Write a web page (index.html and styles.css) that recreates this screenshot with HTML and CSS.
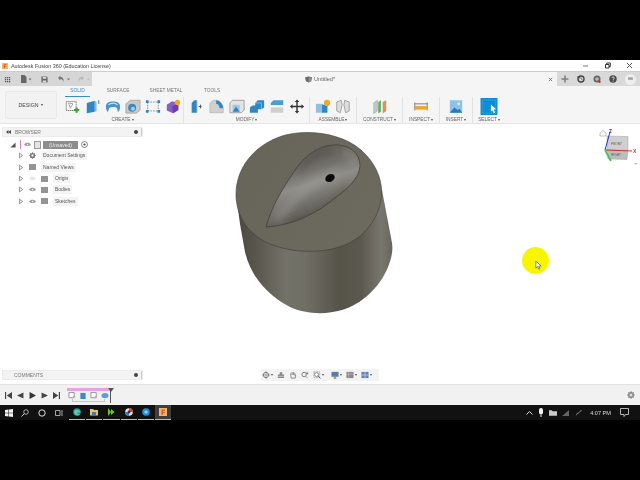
FILE: index.html
```html
<!DOCTYPE html>
<html lang="en">
<head>
<meta charset="utf-8">
<title>Autodesk Fusion 360</title>
<link rel="stylesheet" href="styles.css">
</head>
<body>
<div class="app">
  <header class="titlebar">
    <svg class="ti-logo" viewBox="0 0 8 8"><rect width="8" height="8" fill="#f2b56b"/><path d="M2.5 1.5h3.5v1.2H3.8v1.2h1.800V5H3.800v2H2.500z" fill="#d8541e"/></svg>
    <span class="ti-text">Autodesk Fusion 360 (Education License)</span>
    <div class="win">
      <svg viewBox="0 0 7 7"><path d="M1 4h5" stroke="#777" fill="none"/></svg>
      <svg viewBox="0 0 7 7"><path d="M1.500 2.500h3.500v3.500h-3.500zM2.800 2.500v-1.500h3.500v3.500h-1.300" stroke="#333" fill="none"/></svg>
      <svg viewBox="0 0 7 7"><path d="M1 1l5 5M6 1l-5 5" stroke="#555" fill="none"/></svg>
    </div>
  </header>

  <div class="qat">
    <div class="qat-left">
      <svg class="q-ic" viewBox="0 0 8 8"><path d="M1 1h1.500v1.500H1zM3.300 1h1.500v1.500H3.300zM5.600 1h1.500v1.500H5.600zM1 3.300h1.500v1.500H1zM3.300 3.300h1.500v1.500H3.300zM5.600 3.300h1.500v1.500H5.600zM1 5.600h1.500v1.500H1zM3.300 5.600h1.500v1.500H3.300zM5.600 5.600h1.500v1.500H5.600z" fill="#555"/></svg>
      <svg class="q-file" viewBox="0 0 12 8"><path d="M1 0h3.500L6.500 2v6H1z" fill="#666"/><path d="M8.500 3.500h3L10 5.500z" fill="#777"/></svg>
      <svg class="q-save" viewBox="0 0 8 8"><path d="M.5.500h6l1 1v6h-7z" fill="#666"/><path d="M2 1h4v2H2zM2 5h4v2.500H2z" fill="#ddd"/></svg>
      <svg class="q-undo" viewBox="0 0 14 8"><path d="M1 3l2.500-2.500V2C6 2 7 4 6.500 7 6 5 5 4 3.500 4v1.500z" fill="#777"/><path d="M10 3.500h3L11.500 5.500z" fill="#777"/></svg>
      <svg class="q-undo" viewBox="0 0 14 8"><path d="M7 3L4.500.500V2C2 2 1 4 1.500 7 2 5 3 4 4.500 4v1.500z" fill="#bbb"/><path d="M10 3.500h3L11.500 5.500z" fill="#bbb"/></svg>
    </div>
    <div class="doc">
      <svg class="doc-ic" viewBox="0 0 8 8"><path d="M0 1.500L4 .500l4 1L7 6 4 7.500 1 6z" fill="#6a6a6a"/><path d="M4 2L8 1.500 7 6 4 7.500z" fill="#8d8d8d"/></svg>
      <span>Untitled*</span>
    </div>
    <svg class="doc-x" viewBox="0 0 6 6"><path d="M1 1l4 4M5 1l-4 4" stroke="#666" fill="none"/></svg>
    <div class="qat-right">
      <svg class="plus" viewBox="0 0 8 8"><path d="M4 .500v7M.500 4h7" stroke="#7f7f7f" stroke-width="1.500" fill="none"/></svg>
      <svg viewBox="0 0 8 8"><circle cx="4" cy="4" r="3" stroke="#444" stroke-width="1.400" fill="none"/><path d="M0 1.500l3 .3-1 2.200z" fill="#444"/><path d="M4 2.500V4l1.200.6" stroke="#444" fill="none" stroke-width=".7"/></svg>
      <svg viewBox="0 0 8 8"><circle cx="4" cy="4" r="3.500" fill="#666"/><circle cx="4" cy="4" r="1.800" fill="#bbb"/><circle cx="6.500" cy="6.800" r="1.200" fill="#d22"/></svg>
      <svg viewBox="0 0 8 8"><circle cx="4" cy="4" r="3.700" fill="#4c4c4c"/><path d="M2.800 3c.2-1.400 2.500-1.400 2.500 0 0 1-1.200.9-1.200 1.900" stroke="#eee" stroke-width=".8" fill="none"/><circle cx="4.100" cy="6.100" r=".5" fill="#eee"/></svg>
      <span class="avatar">BB</span>
    </div>
  </div>

  <section class="ribbon">
    <div class="design"><span>DESIGN</span><i class="caret"></i></div>
    <div class="ribbon-main">
      <nav class="tabs">
        <span class="tab tab-solid">SOLID</span>
        <span class="tab tab-surface">SURFACE</span>
        <span class="tab tab-sheet">SHEET METAL</span>
        <span class="tab tab-tools">TOOLS</span>
      </nav>
      <div class="groups">
        <div class="group g-create">
          <div class="icons">
            <svg viewBox="0 0 18 16"><path d="M1.500 2.500h11v10h-11z" fill="#fff" stroke="#666" stroke-dasharray="1.500 .7"/><path d="M4 4l5 1-3 5z" fill="none" stroke="#999"/><path d="M13 9v6M10 12h6" stroke="#39a33a" stroke-width="2.400"/></svg>
            <svg viewBox="0 0 18 16"><path d="M2 4l9-2.500V14L2 15.500z" fill="#2f86c6"/><path d="M11 1.500l2 1.500v10l-2 1z" fill="#7bbbe5"/><path d="M15.500 1v4" stroke="#555"/></svg>
            <svg viewBox="0 0 18 16"><path d="M1 8c0-4 4-5.500 8-5.500S17 4 17 8c0 4-1.500 6-2.500 6l-1-4c-1-2-7-2-9 0l-1 4C2.500 14 1 12 1 8z" fill="#4a93cb"/><path d="M4 6c3-2 7-2 10 0" stroke="#cfe3f2" fill="none" stroke-width="1.400"/></svg>
            <svg viewBox="0 0 18 16"><path d="M1 5l5-4h11v11l-4 3.500H1z" fill="#c9c9c9" stroke="#888" stroke-width=".6"/><circle cx="8" cy="9.500" r="4.500" fill="#3f8ac4"/><circle cx="9" cy="10.500" r="2.200" fill="#a8cfe9"/></svg>
            <svg viewBox="0 0 18 16"><path d="M3 3h12M3 13h12M3 3v10M15 3v10" stroke="#8d8d8d" stroke-dasharray="2 1"/><path d="M1 1h3v3H1zM14 1h3v3h-3zM1 12h3v3H1zM14 12h3v3h-3z" fill="#2f86c6"/></svg>
            <svg viewBox="0 0 18 16"><path d="M2 6l6-4 7 2v8l-6 3.500-7-3z" fill="#8a5ec4"/><path d="M8 8l7-4v8l-6 3.500z" fill="#6b3fb0"/><circle cx="14" cy="3.500" r="3" fill="#f0a92c"/></svg>
          </div>
          <div class="glabel">CREATE<i class="caret"></i></div>
        </div>
        <div class="group g-modify">
          <div class="icons">
            <svg viewBox="0 0 18 16"><path d="M3 4l3-3h3v14H3z" fill="#2f86c6"/><path d="M9 1v14" stroke="#bbb"/><path d="M11 8h3M13 6v4" stroke="#555" stroke-width="1.300"/></svg>
            <svg viewBox="0 0 18 16"><path d="M1 15V6c0-3 3-5 7-5h1c4 1 7 5 7 9v5z" fill="#d0d0d0" stroke="#999" stroke-width=".5"/><path d="M8 1c4 0 8 5 8 9h-4C12 7 10 5 8 5z" fill="#2f86c6"/></svg>
            <svg viewBox="0 0 18 16"><path d="M1 4l3-3h13v11l-3 3H1z" fill="#e4e4e4" stroke="#777" stroke-width=".7"/><path d="M4 6h8v8H4z" fill="#a0c8e6"/><path d="M4 14l4-6 4 6z" fill="#2f86c6"/></svg>
            <svg viewBox="0 0 18 16"><path d="M1 9l3-2h6v8H1z" fill="#2f86c6"/><path d="M7 4l3-3h7v8l-3 2H7z" fill="#2f86c6"/><path d="M7 4h7v7" stroke="#9fcbea" fill="none" stroke-width=".8"/></svg>
            <svg viewBox="0 0 18 16"><path d="M2 4l3-3h11v6H2z" fill="#4a9bd6"/><path d="M2 7h14" stroke="#fff"/><path d="M2 9h14v6H2z" fill="#cfcfcf"/></svg>
            <svg viewBox="0 0 18 16"><path d="M9 0l2.500 3h-1.700v4.200H14V5.500L17 8l-3 2.500V8.800H9.800V13h1.700L9 16l-2.500-3h1.700V8.800H4v1.700L1 8l3-2.500v1.700h4.200V3H6.500z" fill="#333"/></svg>
          </div>
          <div class="glabel">MODIFY<i class="caret"></i></div>
        </div>
        <div class="group g-assemble">
          <div class="icons">
            <svg viewBox="0 0 18 16"><path d="M1 5h8v10H1z" fill="#8fbfe3"/><path d="M8 6h6v9H8z" fill="#2f86c6"/><circle cx="13.500" cy="4" r="3.500" fill="#f0a92c"/></svg>
            <svg viewBox="0 0 18 16"><path d="M2 3l5-2 1 5-2 9-4-2z" fill="#dedede" stroke="#8a8a8a" stroke-width=".8"/><path d="M16 3l-5-2-1 5 2 9 4-2z" fill="#dedede" stroke="#8a8a8a" stroke-width=".8"/></svg>
          </div>
          <div class="glabel">ASSEMBLE<i class="caret"></i></div>
        </div>
        <div class="group g-construct">
          <div class="icons">
            <svg viewBox="0 0 18 16"><path d="M2 4l4-3v12l-4 3z" fill="#c7c7c7" stroke="#888" stroke-width=".5"/><path d="M7 3l3-2v13l-3 2z" fill="#5eaf62"/><path d="M12 3l4-2v12l-4 3z" fill="#d79461"/></svg>
          </div>
          <div class="glabel">CONSTRUCT<i class="caret"></i></div>
        </div>
        <div class="group g-inspect">
          <div class="icons">
            <svg viewBox="0 0 18 16"><path d="M2 3.500v9M16 3.500v9M2 5h14" stroke="#555" fill="none" stroke-width=".8"/><path d="M2 7.500h14v4H2z" fill="#efa631"/></svg>
          </div>
          <div class="glabel">INSPECT<i class="caret"></i></div>
        </div>
        <div class="group g-insert">
          <div class="icons">
            <svg viewBox="0 0 18 16"><path d="M2 1h14v14H2z" fill="#8cc3ea"/><path d="M2 15l5-6 4 3 2-1.500 3 4.500z" fill="#2f79b8"/><circle cx="12" cy="5" r="1.500" fill="#e6f2fb"/></svg>
          </div>
          <div class="glabel">INSERT<i class="caret"></i></div>
        </div>
        <div class="group g-select">
          <div class="icons">
            <svg viewBox="0 0 18 18"><path d="M0 0h18v18H0z" fill="#0d8ed6"/><path d="M2 2h14v14H2z" fill="none" stroke="#6cc0ee" stroke-width=".6" stroke-dasharray="1 1"/><path d="M11 7l5.500 5-2.500.3 1.500 3.200-1.400.6-1.500-3.100-1.600 1.500z" fill="#fff"/></svg>
          </div>
          <div class="glabel">SELECT<i class="caret"></i></div>
        </div>
      </div>
    </div>
  </section>

  <main class="canvas">
    <svg class="model" viewBox="225 125 180 195">
      <defs>
        <linearGradient id="side" gradientUnits="userSpaceOnUse" x1="236" y1="250" x2="392" y2="250">
          <stop offset="0" stop-color="#4a483e"/>
          <stop offset=".12" stop-color="#58564c"/>
          <stop offset=".32" stop-color="#737269"/>
          <stop offset=".45" stop-color="#6f6e65"/>
          <stop offset=".66" stop-color="#565449"/>
          <stop offset=".8" stop-color="#5b594f"/>
          <stop offset=".93" stop-color="#78776e"/>
          <stop offset="1" stop-color="#68665c"/>
        </linearGradient>
        <linearGradient id="top" gradientUnits="userSpaceOnUse" x1="240" y1="150" x2="380" y2="240">
          <stop offset="0" stop-color="#67645a"/>
          <stop offset="1" stop-color="#6d6a60"/>
        </linearGradient>
        <linearGradient id="drop" gradientUnits="userSpaceOnUse" x1="305" y1="150" x2="325" y2="215">
          <stop offset="0" stop-color="#5d5b55"/>
          <stop offset=".3" stop-color="#73716b"/>
          <stop offset=".5" stop-color="#8f8e88"/>
          <stop offset=".75" stop-color="#72706a"/>
          <stop offset="1" stop-color="#5c5a54"/>
        </linearGradient>
        <filter id="soft" x="-30%" y="-30%" width="160%" height="160%"><feGaussianBlur stdDeviation="4"/></filter>
        <clipPath id="dropclip"><path d="M266 227C271 208 283 187 298 166 309 151 325 144 338 145 350 146 360 153 360 166 359 178 349 188 335 198 318 212 296 225 266 227z"/></clipPath>
      </defs>
      <path d="M236 194L240 224 245 252C250 274 266 295 290 307 305 314 325 315 342 310 362 304 380 287 388 267 392 257 393 250 392 243L382 190z" fill="url(#side)"/>
      <path d="M236 194C236 170 252 146 282 136 305 129 340 132 361 150 376 163 384 182 381 200 378 218 366 236 345 245 320 255 285 253 262 240 245 230 236 213 236 194z" fill="url(#top)" stroke="#3e3c34" stroke-width=".6"/>
      <path d="M266 227C271 208 283 187 298 166 309 151 325 144 338 145 350 146 360 153 360 166 359 178 349 188 335 198 318 212 296 225 266 227z" fill="url(#drop)" stroke="#3b3933" stroke-width=".7"/>
      <g clip-path="url(#dropclip)">
        <path d="M276 220C292 200 306 186 338 172" stroke="#a6a59f" stroke-width="3" fill="none" filter="url(#soft)"/>
        <path d="M345 150C352 155 356 162 352 172" stroke="#8b8a84" stroke-width="4" fill="none" filter="url(#soft)"/>
        <path d="M300 170C310 155 322 152 332 152" stroke="#4e4c47" stroke-width="4" fill="none" filter="url(#soft)"/>
        <path d="M290 224C308 220 330 208 350 188" stroke="#4a4843" stroke-width="3" fill="none" filter="url(#soft)"/>
      </g>
      <ellipse cx="330" cy="178" rx="5" ry="3.700" transform="rotate(-30 330 178)" fill="#0a0a0a"/>
    </svg>

    <svg class="cube" viewBox="0 0 41 38">
      <path d="M1 5l3-2.500 3 2.500v3H1z" fill="#fff" stroke="#999" stroke-width=".6"/>
      <path d="M8 8l21 .5v14l-21-.5z" fill="#cfcfcf" stroke="#a3a3a3" stroke-width=".5"/>
      <path d="M8 22l21 .5-1 9-19-.5z" fill="#bdbdbd" stroke="#a3a3a3" stroke-width=".5"/>
      <path d="M6 22L11 4" stroke="#2730c8" stroke-width="1"/>
      <path d="M6 22l27 1" stroke="#d43030" stroke-width="1"/>
      <path d="M6 22l6 11" stroke="#45c45a" stroke-width="1.800"/>
      <text x="10" y="5" class="axis axis-z">Z</text>
      <text x="34" y="25" class="axis axis-x">X</text>
      <text x="12" y="17" class="cube-t">FRONT</text>
      <text x="12" y="28" class="cube-t">RIGHT</text>
      <path d="M35 35h3.500l-1.750 2z" fill="#bbb"/>
    </svg>

    <div class="spot">
      <svg viewBox="0 0 8 12"><path d="M1 1v8l2-1.800 1.500 3 1.300-.6L4.300 6.700 7 6.500z" fill="#fff" stroke="#444" stroke-width=".7"/></svg>
    </div>

    <aside class="panels">
      <div class="browser">
        <div class="pbar">
          <svg class="dbl" viewBox="0 0 5 4"><path d="M2.500 0v4L0 2zM5 0v4L2.500 2z" fill="#444"/></svg>
          <span class="pbar-t">BROWSER</span>
          <i class="dot"></i><i class="grip"></i>
        </div>
        <ul class="tree">
          <li class="row row-root">
            <svg class="tri" viewBox="0 0 7 7"><path d="M6.500 .500v6h-6z" fill="#555"/></svg>
            <i class="pink"></i>
            <svg class="eye" viewBox="0 0 8 5"><path d="M0 2.500C2 0 6 0 8 2.500 6 5 2 5 0 2.500z" fill="#999"/><circle cx="4" cy="2.500" r="1" fill="#eee"/></svg>
            <i class="docbox"></i>
            <span class="rootname">(Unsaved)</span>
            <svg class="rad" viewBox="0 0 7 7"><circle cx="3.500" cy="3.500" r="3" fill="#fff" stroke="#555" stroke-width=".7"/><circle cx="3.500" cy="3.500" r="1.100" fill="#444"/></svg>
          </li>
          <li class="row">
            <svg class="arrow" viewBox="0 0 5 7"><path d="M.5.500l4 3-4 3z" fill="#fff" stroke="#555" stroke-width=".8"/></svg>
            <svg class="gear" viewBox="0 0 8 8"><circle cx="4" cy="4" r="2.300" fill="none" stroke="#777" stroke-width="1.400"/><path d="M4 0v8M0 4h8M1.200 1.200l5.600 5.600M6.800 1.200L1.200 6.800" stroke="#777" stroke-width=".8"/><circle cx="4" cy="4" r="1.100" fill="#f4f4f4"/></svg>
            <span class="lbl">Document Settings</span>
          </li>
          <li class="row">
            <svg class="arrow" viewBox="0 0 5 7"><path d="M.5.500l4 3-4 3z" fill="#fff" stroke="#555" stroke-width=".8"/></svg>
            <i class="folder"></i>
            <span class="lbl">Named Views</span>
          </li>
          <li class="row">
            <svg class="arrow" viewBox="0 0 5 7"><path d="M.5.500l4 3-4 3z" fill="#fff" stroke="#555" stroke-width=".8"/></svg>
            <svg class="eye eye-row off" viewBox="0 0 8 5"><path d="M0 2.500C2 0 6 0 8 2.500 6 5 2 5 0 2.500z" fill="#e6e6e6"/></svg>
            <i class="folder"></i>
            <span class="lbl">Origin</span>
          </li>
          <li class="row">
            <svg class="arrow" viewBox="0 0 5 7"><path d="M.5.500l4 3-4 3z" fill="#fff" stroke="#555" stroke-width=".8"/></svg>
            <svg class="eye eye-row" viewBox="0 0 8 5"><path d="M0 2.500C2 0 6 0 8 2.500 6 5 2 5 0 2.500z" fill="#999"/><circle cx="4" cy="2.500" r="1" fill="#eee"/></svg>
            <i class="folder"></i>
            <span class="lbl">Bodies</span>
          </li>
          <li class="row">
            <svg class="arrow" viewBox="0 0 5 7"><path d="M.5.500l4 3-4 3z" fill="#fff" stroke="#555" stroke-width=".8"/></svg>
            <svg class="eye eye-row" viewBox="0 0 8 5"><path d="M0 2.500C2 0 6 0 8 2.500 6 5 2 5 0 2.500z" fill="#999"/><circle cx="4" cy="2.500" r="1" fill="#eee"/></svg>
            <i class="folder"></i>
            <span class="lbl">Sketches</span>
          </li>
        </ul>
      </div>
      <div class="pbar comments">
        <span class="pbar-t">COMMENTS</span>
        <i class="dot"></i><i class="grip"></i>
      </div>
    </aside>

    <div class="navbar">
      <svg viewBox="0 0 9 9"><circle cx="4.500" cy="4.500" r="3" fill="none" stroke="#777"/><path d="M4.500 0v9M0 4.500h9" stroke="#777" stroke-width=".7"/></svg><i class="caret"></i>
      <svg viewBox="0 0 9 9"><path d="M1 4h7v4H1zM3 1.500h3V4H3z" fill="#8a8a8a"/><path d="M1 6h7" stroke="#eee" stroke-width=".6"/></svg>
      <svg viewBox="0 0 9 9"><path d="M2 5V2.500M3.500 4.500V1.200M5 4.500V1.200M6.500 5V2M2 5l.5 3h4.500L7.500 4" stroke="#666" fill="none" stroke-width=".8"/></svg>
      <svg viewBox="0 0 9 9"><circle cx="3.500" cy="4" r="2.500" fill="none" stroke="#666" stroke-width=".9"/><path d="M5.500 6l2 2M7 1v3M5.500 2.500h3" stroke="#666" stroke-width=".7"/></svg>
      <svg viewBox="0 0 9 9"><path d="M1 1h6.500v6.500H1z" fill="none" stroke="#777" stroke-dasharray="1.200 .6" stroke-width=".7"/><circle cx="4" cy="4" r="2.200" fill="#fff" stroke="#666" stroke-width=".8"/><path d="M5.500 5.500L8.500 8.500" stroke="#666"/></svg><i class="caret"></i>
      <span class="nsep"></span>
      <svg viewBox="0 0 9 9"><path d="M.5 1h8v5.500h-8z" fill="#5c7f9f"/><path d="M3 8h3" stroke="#666"/><path d="M4.500 6.500V8" stroke="#666"/></svg><i class="caret"></i>
      <svg viewBox="0 0 9 9"><path d="M.5 1h8v7h-8z" fill="#888"/><path d="M.5 3.500h8M3 1v7" stroke="#ddd" stroke-width=".5"/></svg><i class="caret"></i>
      <svg viewBox="0 0 9 9"><path d="M.5 1h8v7h-8z" fill="#6284b5"/><path d="M.5 4.500h8M4.500 1v7" stroke="#dde" stroke-width=".7"/></svg><i class="caret"></i>
    </div>
  </main>

  <section class="timeline">
    <div class="controls">
      <svg viewBox="0 0 6 6"><path d="M0 0h1v6H0zM6 0v6L1.500 3z" fill="#444"/></svg>
      <svg viewBox="0 0 6 6"><path d="M5.500 .5v5L0 3z" fill="#444"/></svg>
      <svg viewBox="0 0 6 6"><path d="M.5 0v6L6 3z" fill="#333"/></svg>
      <svg viewBox="0 0 6 6"><path d="M.5 .5v5L6 3z" fill="#444"/></svg>
      <svg viewBox="0 0 6 6"><path d="M6 0H5v6h1zM0 0v6l4.500-3z" fill="#444"/></svg>
    </div>
    <div class="track">
      <i class="range"></i>
      <svg class="t-ic" viewBox="0 0 8 8"><path d="M.5.500h6v6h-6z" fill="#fff" stroke="#88a"/><path d="M4 7l3-3" stroke="#e59a3a"/></svg>
      <svg class="t-ic" viewBox="0 0 8 8"><path d="M1 1h6v7H1z" fill="#3a8cc8"/></svg>
      <svg class="t-ic" viewBox="0 0 8 8"><path d="M.5.500h6v6h-6z" fill="#fff" stroke="#88a"/><path d="M4 7l3-3" stroke="#e59a3a"/></svg>
      <svg class="t-ic" viewBox="0 0 8 8"><ellipse cx="4" cy="4" rx="4" ry="3" fill="#5a9fd2"/></svg>
      <i class="stem"></i>
      <svg class="marker" viewBox="0 0 6 4"><path d="M0 0h6L3 4z" fill="#555"/></svg>
      <i class="links"></i>
    </div>
    <svg class="settings" viewBox="0 0 8 8"><circle cx="4" cy="4" r="2.300" fill="none" stroke="#888" stroke-width="1.400"/><path d="M4 0v8M0 4h8M1.200 1.200l5.600 5.600M6.800 1.200L1.200 6.800" stroke="#888" stroke-width=".9"/><circle cx="4" cy="4" r="1.100" fill="#f2f2f2"/></svg>
  </section>

  <footer class="taskbar">
    <svg class="t-win" viewBox="0 0 8 8"><path d="M0 1l3.500-.5V3.800H0zM4 .4L8 0v3.800H4zM0 4.200h3.500v3.300L0 7zM4 4.200h4V8l-4-.5z" fill="#f4f4f4"/></svg>
    <svg class="t-sys" viewBox="0 0 8 8"><circle cx="5" cy="3" r="2.300" fill="none" stroke="#ccc" stroke-width=".8"/><path d="M3.400 4.700L.5 7.500" stroke="#ccc"/></svg>
    <svg class="t-sys" viewBox="0 0 8 8"><circle cx="4" cy="4" r="3.200" fill="none" stroke="#ddd"/></svg>
    <svg class="t-sys" viewBox="0 0 8 8"><path d="M.5 1.500h4.500v5H.5zM7 1v6" fill="none" stroke="#ccc" stroke-width=".8"/></svg>
    <div class="apps">
      <span class="app-i"><svg viewBox="0 0 8 8"><circle cx="4" cy="4" r="3.800" fill="#1b8fc9"/><path d="M1 3c1-2 6-2 6.500 1.500L4 4.500c0 1 1 2 3 1.500-1.500 2-5 2-5.500-1" fill="#5fd08c"/></svg></span>
      <span class="app-i"><svg viewBox="0 0 8 8"><path d="M0 1h3l1 1h4v5.500H0z" fill="#e8c25a"/><path d="M2 4h4v3H2z" fill="#3a7fb8"/></svg></span>
      <span class="app-i"><svg viewBox="0 0 8 8"><path d="M1 0l3 4-3 4zM4 1l3.500 3L4 7z" fill="#5bd414"/></svg></span>
      <span class="app-i"><svg viewBox="0 0 8 8"><circle cx="4" cy="4" r="3.800" fill="#e8e4dc"/><path d="M4 0a4 4 0 0 1 4 4H4z" fill="#d8434b"/><path d="M0 4a4 4 0 0 0 4 4V4z" fill="#4478c4"/><circle cx="4" cy="4" r="1.400" fill="#333"/></svg></span>
      <span class="app-i"><svg viewBox="0 0 8 8"><circle cx="4" cy="4" r="3.800" fill="#1f8fe0"/><circle cx="4" cy="4" r="1.600" fill="#9cd4f7"/></svg></span>
      <span class="app-i app-on"><svg viewBox="0 0 8 8"><rect width="8" height="8" fill="#f2b56b"/><path d="M2.500 1.500h3.500v1.200H3.800v1.200h1.800V5H3.800v2H2.500z" fill="#d8541e"/></svg></span>
    </div>
    <div class="tray">
      <svg class="tr1" viewBox="0 0 7 4"><path d="M.5 3.500l3-3 3 3" stroke="#ddd" fill="none"/></svg>
      <svg class="tr2" viewBox="0 0 6 9"><rect x="1" width="4" height="6.500" rx="2" fill="#f2f2f2"/><path d="M3 6.500V9" stroke="#f2f2f2"/></svg>
      <svg class="tr3" viewBox="0 0 9 6"><path d="M0 0h3l1 1h5v5H0z" fill="#ccc"/></svg>
      <svg class="tr3" viewBox="0 0 9 7"><path d="M0 7L8 0v7z" fill="#666"/></svg>
      <svg class="tr3" viewBox="0 0 9 8"><path d="M1 7c1-4 3-2 4-4s2-2 3-2" stroke="#bbb" fill="none"/></svg>
      <span class="clock">4:07 PM</span>
      <svg class="tr4" viewBox="0 0 9 9"><path d="M.5.500h8v6h-3L4 8.500V6.500H.5z" fill="none" stroke="#ddd" stroke-width=".8"/></svg>
    </div>
  </footer>
</div>
</body>
</html>
```

FILE: styles.css
```css
* { box-sizing: border-box; }
html, body { margin: 0; height: 100%; background: #000; overflow: hidden; }
body { padding-top: 60px; font-family: "Liberation Sans", Arial, sans-serif; color: #666; }
ul { list-style: none; margin: 0; padding: 0; }
i { display: block; }
svg { display: block; flex: none; }

.app { height: 360px; display: flex; flex-direction: column; background: #fff; filter: blur(.35px); }

/* Title bar */
.titlebar { height: 11px; flex: none; display: flex; align-items: center; padding-left: 2px; background: #fff; }
.ti-logo { width: 6px; height: 6px; margin-right: 3px; }
.ti-text { font-size: 5.400px; color: #444; white-space: nowrap; }
.win { margin-left: auto; display: flex; gap: 15px; padding-right: 7px; }
.win svg { width: 7px; height: 7px; }

/* Quick access */
.qat { height: 15px; flex: none; display: flex; align-items: center; background: #f5f5f5; border-top: 1px solid #ccc; }
.qat-left { width: 92px; height: 100%; background: #d6d6d6; display: flex; align-items: center; padding-left: 4px; }
.q-ic { width: 7px; height: 7px; margin-right: 9px; }
.q-file { width: 12px; height: 8px; margin-right: 9px; }
.q-save { width: 7px; height: 7px; margin-right: 9px; }
.q-undo { width: 14px; height: 8px; margin-right: 6px; }
.doc { margin-left: 213px; display: flex; align-items: center; gap: 2px; font-size: 5.600px; color: #666; width: 243px; }
.doc-ic { width: 7px; height: 7px; }
.doc-x { width: 5px; height: 5px; }
.qat-right { margin-left: auto; width: 83px; height: 100%; background: #d9d9d9; display: flex; align-items: center; gap: 8px; padding-left: 4px; }
.qat-right svg { width: 8px; height: 8px; }
.avatar { width: 11px; height: 11px; border-radius: 50%; background: #eee; font-size: 3.500px; text-align: center; line-height: 11px; color: #555; }

/* Ribbon */
.ribbon { height: 38px; flex: none; display: flex; background: #f5f5f5; border-bottom: 1px solid #e4e4e4; }
.design { width: 52px; height: 28px; margin: 5px 0 0 5px; flex: none; display: flex; align-items: center; justify-content: center; gap: 2px; background: #f2f2f2; border: 1px solid #e9e9e9; border-radius: 2px; font-size: 5.200px; color: #444; }
.caret { width: 0; height: 0; flex: none; border: 1.500px solid transparent; border-top: 2px solid #444; border-bottom: 0; margin-left: 1px; }
.ribbon-main { flex: 1; display: flex; flex-direction: column; margin-left: 5px; }
.tabs { height: 11px; flex: none; display: flex; padding-left: 3px; font-size: 4.800px; color: #777; }
.tab { height: 11px; line-height: 10px; text-align: center; white-space: nowrap; }
.tab-solid { width: 25px; color: #3a8cc8; border-bottom: 1px solid #3a8cc8; }
.tab-surface { width: 32px; margin-left: 12px; }
.tab-sheet { width: 44px; margin-left: 10px; }
.tab-tools { width: 24px; margin-left: 12px; }
.groups { flex: 1; display: flex; }
.group { display: flex; flex-direction: column; align-items: center; border-right: 1px solid #e2e2e2; height: 26px; }
.g-create { width: 122px; }
.g-modify { width: 126px; }
.g-assemble { width: 47px; }
.g-construct { width: 46px; }
.g-inspect { width: 37px; }
.g-insert { width: 33px; }
.g-select { width: 32px; border-right: 0; }
.icons { height: 18px; display: flex; align-items: center; gap: 4px; }
.icons svg { width: 16px; height: 15px; }
.g-select .icons svg { width: 18px; height: 17px; }
.glabel { display: flex; align-items: center; font-size: 4.800px; color: #666; white-space: nowrap; line-height: 6px; margin-top: 2px; }
.glabel .caret { border-top-color: #555; }

/* Canvas */
.canvas { flex: 1; min-height: 0; position: relative; display: flex; background: #fff; }
.model { position: absolute; left: 225px; top: 1px; width: 180px; height: 195px; }
.cube { position: absolute; left: 599px; top: 4px; width: 41px; height: 38px; }
.axis { font-size: 5px; font-family: "Liberation Sans", Arial, sans-serif; font-weight: bold; }
.axis-z { fill: #2730c8; }
.axis-x { fill: #d43030; }
.cube-t { font-size: 3.200px; fill: #555; font-family: "Liberation Sans", Arial, sans-serif; }
.spot { position: absolute; left: 522px; top: 123px; width: 27px; height: 27px; border-radius: 50%; background: #f9f400; }
.spot svg { position: absolute; left: 13px; top: 13px; width: 7px; height: 11px; }

.panels { width: 143px; padding: 3px 0 4px 2px; display: flex; flex-direction: column; justify-content: space-between; position: relative; }
.pbar { height: 10px; display: flex; align-items: center; padding-left: 3px; background: #f3f3f3; border: 1px solid #ebebeb; font-size: 5px; color: #777; }
.dbl { width: 5px; height: 4px; margin-right: 4px; }
.pbar-t { flex: 1; }
.comments { padding-left: 11px; }
.dot { width: 4px; height: 4px; border-radius: 50%; background: #444; margin-right: 3px; }
.grip { width: 1px; height: 8px; background: #ccc; }
.tree { padding: 2px 0 0 8px; }
.row { height: 11.300px; display: flex; align-items: center; padding-left: 9px; font-size: 5px; color: #555; }
.row-root { padding-left: 0; }
.tri { width: 6px; height: 6px; margin-right: 4px; }
.pink { width: 1px; height: 9px; background: #d77ad6; margin-right: 3px; }
.eye { width: 7px; height: 5px; margin-right: 3px; }
.eye-row { margin-right: 5px; }
.docbox { width: 7px; height: 8px; background: #e4e4e4; border: 1px solid #999; margin-right: 2px; }
.rootname { width: 35px; height: 8px; line-height: 8px; background: #8d8d8d; color: #eee; text-align: center; font-size: 5px; margin-right: 1px; }
.rad { width: 7px; height: 7px; margin-left: 2px; }
.arrow { width: 4px; height: 7px; margin-right: 6px; }
.gear { width: 7px; height: 7px; margin-right: 5px; }
.folder { width: 7px; height: 6px; background: #949494; margin-right: 5px; }
.lbl { background: #f4f4f4; padding: 0 2px; line-height: 9px; }

.navbar { position: absolute; left: 261px; top: 245px; height: 12px; width: 118px; display: flex; align-items: center; gap: 1px; background: #f3f3f3; }
.navbar svg { width: 8px; height: 8px; margin-left: 3px; }
.navbar svg:first-child { margin-left: 1px; }
.navbar .caret { margin-left: 0; border-top-color: #555; }
.nsep { width: 2px; }

/* Timeline */
.timeline { height: 21px; flex: none; display: flex; align-items: center; background: #f1f1f1; border-top: 1px solid #e2e2e2; padding-left: 5px; }
.controls { display: flex; gap: 5px; }
.controls svg { width: 7px; height: 7px; }
.track { width: 46px; height: 17px; margin-left: 7px; position: relative; display: flex; gap: 2px; align-items: center; padding-left: 1px; }
.t-ic { width: 8px; height: 7px; }
.t-ic + .t-ic { margin-left: 1px; }
.range { position: absolute; left: 0; top: 1px; width: 44px; height: 3px; background: #e7a3e0; }
.stem { position: absolute; left: 43px; top: 2px; width: 1px; height: 14px; background: #555; }
.marker { position: absolute; left: 41px; top: 1px; width: 6px; height: 4px; }
.links { position: absolute; left: 5px; top: 12px; width: 33px; height: 3px; border: 1px solid #cfc7a8; border-top: 0; }
.settings { margin-left: auto; margin-right: 5px; width: 8px; height: 8px; }

/* Taskbar */
.taskbar { height: 15px; flex: none; display: flex; align-items: center; background: #111; padding-left: 5px; }
.t-win { width: 8px; height: 8px; margin-right: 8px; }
.t-sys { width: 8px; height: 8px; margin-right: 9px; }
.apps { display: flex; height: 100%; margin-left: -3px; gap: 1px; }
.app-i { width: 16.200px; height: 100%; display: flex; align-items: center; justify-content: center; border-bottom: 1px solid #d9b98a; }
.app-i svg { width: 8px; height: 8px; }
.app-on { background: #3e3e3e; }
.tray { margin-left: auto; display: flex; align-items: center; color: #ddd; font-size: 5.600px; padding-right: 11px; }
.tr1 { width: 7px; height: 4px; margin-right: 5px; }
.tr2 { width: 6px; height: 9px; margin-right: 5px; }
.tr3 { width: 8px; height: 6px; margin-right: 5px; }
.clock { margin: 0 9px 0 2px; white-space: nowrap; }
.tr4 { width: 9px; height: 9px; }
```
